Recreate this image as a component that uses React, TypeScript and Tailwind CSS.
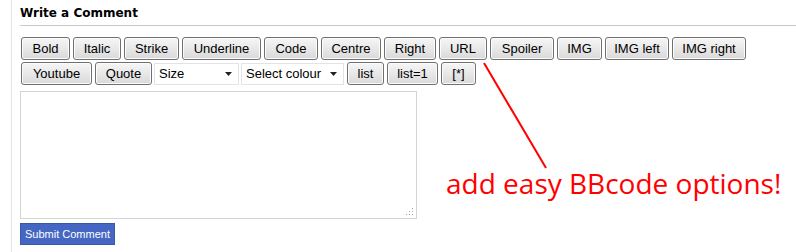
const row1: [string, number][] = [
  ["Bold", 49],
  ["Italic", 48],
  ["Strike", 55],
  ["Underline", 79],
  ["Code", 54],
  ["Centre", 60],
  ["Right", 52],
  ["URL", 48],
  ["Spoiler", 64],
  ["IMG", 45],
  ["IMG left", 64],
  ["IMG right", 74],
];

function BBButton({ label, width }: { label: string; width: number }) {
  return (
    <button
      type="button"
      style={{ width }}
      className="h-[23px] shrink-0 rounded-[3px] border border-[#707070] bg-gradient-to-b from-[#f6f6f6] via-[#e8e8e8] to-[#d9d9d9] text-[13px] leading-none text-black shadow-[inset_0_0_0_1px_#fcfcfc] [font-family:'Liberation_Sans',Arial,sans-serif]"
    >
      {label}
    </button>
  );
}

function FakeSelect({ label, width }: { label: string; width: number }) {
  return (
    <div
      style={{ width }}
      className="flex h-[22px] shrink-0 items-center justify-between border border-[#e2e3ea] bg-white pl-[4px] pr-[6px] text-[13px] text-black [font-family:'Liberation_Sans',Arial,sans-serif]"
    >
      <span>{label}</span>
      <svg width="7" height="4" viewBox="0 0 7 4">
        <path d="M0 0h7L3.5 4z" fill="#222" />
      </svg>
    </div>
  );
}

export default function App() {
  return (
    <div className="relative h-[252px] w-[796px] overflow-hidden bg-white">
      <div className="ml-[11px] h-full border-l border-[#e4e4e4] pl-[8px]">
        <h2 className="pt-[6px] text-[12px] font-bold leading-[15px] text-black [font-family:'DejaVu_Sans',Verdana,sans-serif]">
          Write a Comment
        </h2>
        <div className="mt-[4px] h-px bg-[#c8c8c8]" />

        <div className="mt-[11px] flex flex-col gap-[2px] pl-px">
          <div className="flex gap-[3px]">
            {row1.map(([label, w]) => (
              <BBButton key={label} label={label} width={w} />
            ))}
          </div>
          <div className="flex items-center gap-[3px]">
            <BBButton label="Youtube" width={71} />
            <BBButton label="Quote" width={57} />
            <div className="-ml-px flex gap-[2px]">
              <FakeSelect label="Size" width={85} />
              <FakeSelect label="Select colour" width={103} />
            </div>
            <BBButton label="list" width={37} />
            <BBButton label="list=1" width={51} />
            <BBButton label="[*]" width={35} />
          </div>
        </div>

        <div className="relative mt-[6px] h-[128px] w-[397px] border border-[#d4d4d4] bg-white">
          <svg
            className="absolute bottom-[2px] right-[2px]"
            width="8"
            height="8"
            viewBox="0 0 8 8"
          >
            <g fill="#a0a0a0">
              <rect x="6" y="0" width="1" height="1" />
              <rect x="3" y="3" width="1" height="1" />
              <rect x="6" y="3" width="1" height="1" />
              <rect x="0" y="6" width="1" height="1" />
              <rect x="3" y="6" width="1" height="1" />
              <rect x="6" y="6" width="1" height="1" />
            </g>
          </svg>
        </div>

        <button
          type="button"
          className="mt-[4px] h-[22px] w-[95px] whitespace-nowrap border border-[#3a58a8] bg-[#4567c3] text-center text-[11px] leading-none text-white [font-family:'Liberation_Sans',Tahoma,sans-serif]"
        >
          Submit Comment
        </button>
      </div>

      <svg className="absolute left-0 top-0" width="796" height="252">
        <line x1="484" y1="63" x2="546" y2="168" stroke="#ff0000" strokeWidth="2" />
      </svg>
      <div className="absolute left-[446px] top-[165px] text-[28px] leading-[36px] text-[#ff0000] [font-family:'Open_Sans',sans-serif]">
        add easy BBcode options!
      </div>
    </div>
  );
}
